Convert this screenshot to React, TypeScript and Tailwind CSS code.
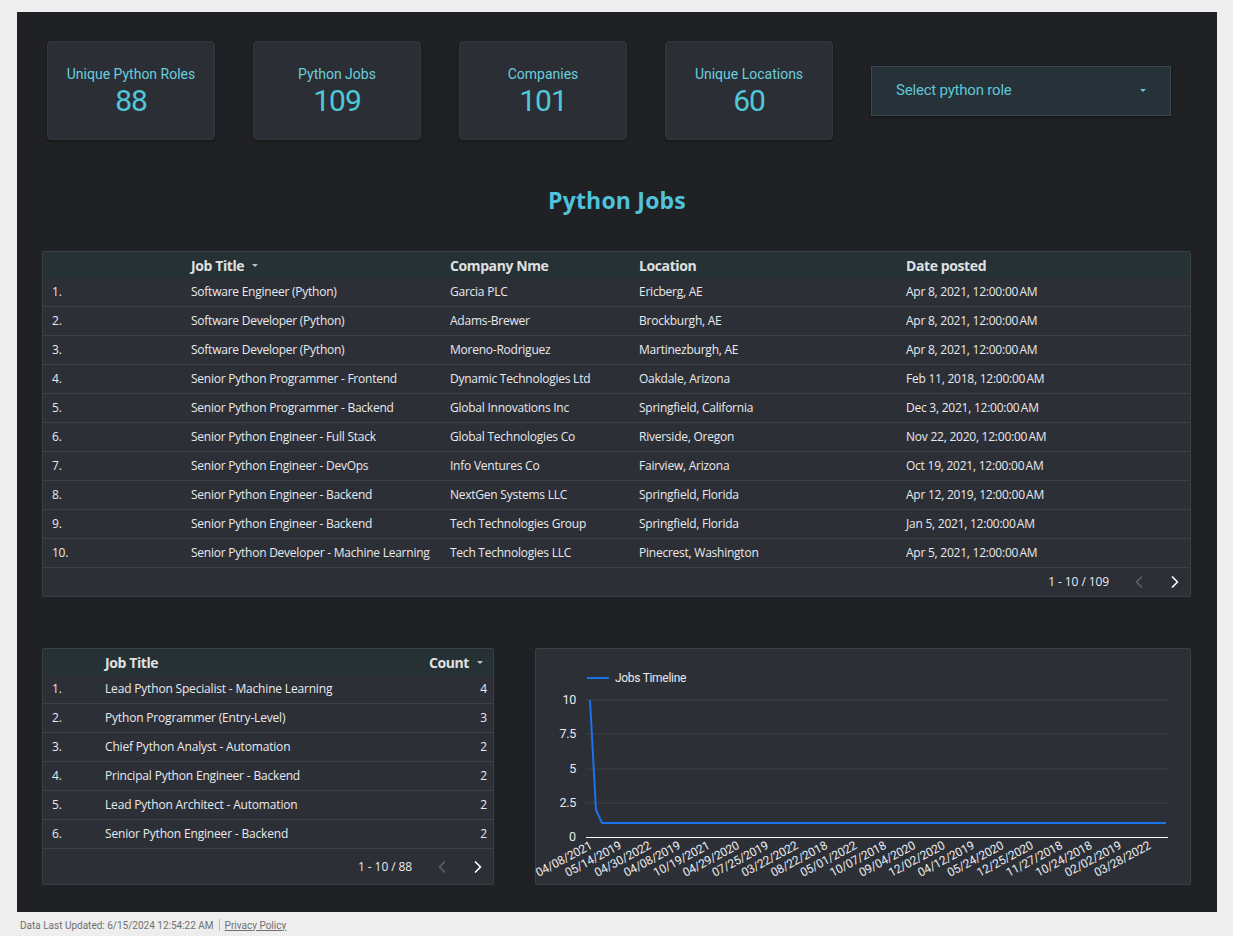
import React from 'react';
import { ChevronLeft, ChevronRight } from 'lucide-react';

const kpis = [
  { label: 'Unique Python Roles', value: '88' },
  { label: 'Python Jobs', value: '109' },
  { label: 'Companies', value: '101' },
  { label: 'Unique Locations', value: '60' },
];

const T = '12:00:00\u202FAM';

const jobs = [
  ['Software Engineer (Python)', 'Garcia PLC', 'Ericberg, AE', `Apr 8, 2021, ${T}`],
  ['Software Developer (Python)', 'Adams-Brewer', 'Brockburgh, AE', `Apr 8, 2021, ${T}`],
  ['Software Developer (Python)', 'Moreno-Rodriguez', 'Martinezburgh, AE', `Apr 8, 2021, ${T}`],
  ['Senior Python Programmer - Frontend', 'Dynamic Technologies Ltd', 'Oakdale, Arizona', `Feb 11, 2018, ${T}`],
  ['Senior Python Programmer - Backend', 'Global Innovations Inc', 'Springfield, California', `Dec 3, 2021, ${T}`],
  ['Senior Python Engineer - Full Stack', 'Global Technologies Co', 'Riverside, Oregon', `Nov 22, 2020, ${T}`],
  ['Senior Python Engineer - DevOps', 'Info Ventures Co', 'Fairview, Arizona', `Oct 19, 2021, ${T}`],
  ['Senior Python Engineer - Backend', 'NextGen Systems LLC', 'Springfield, Florida', `Apr 12, 2019, ${T}`],
  ['Senior Python Engineer - Backend', 'Tech Technologies Group', 'Springfield, Florida', `Jan 5, 2021, ${T}`],
  ['Senior Python Developer - Machine Learning', 'Tech Technologies LLC', 'Pinecrest, Washington', `Apr 5, 2021, ${T}`],
];

const roleCounts: [string, number][] = [
  ['Lead Python Specialist - Machine Learning', 4],
  ['Python Programmer (Entry-Level)', 3],
  ['Chief Python Analyst - Automation', 2],
  ['Principal Python Engineer - Backend', 2],
  ['Lead Python Architect - Automation', 2],
  ['Senior Python Engineer - Backend', 2],
];

const dates = [
  '04/08/2021', '05/14/2019', '04/30/2022', '04/08/2019', '10/19/2021',
  '04/29/2020', '07/25/2019', '03/22/2022', '08/22/2018', '05/01/2022',
  '10/07/2018', '09/04/2020', '12/02/2020', '04/12/2019', '05/24/2020',
  '12/25/2020', '11/27/2018', '10/24/2018', '02/02/2019', '03/28/2022',
];

const SortArrow = () => (
  <svg width="8" height="5" viewBox="0 0 8 5" className="ml-[7px] mt-[1px]">
    <path d="M1 1h6L4 4z" fill="#bdc1c6" />
  </svg>
);

const Pager = ({ text }: { text: string }) => (
  <div className="flex items-center justify-end text-[12px] text-[#e8eaed]">
    <span className="tracking-[-0.1px]">{text}</span>
    <ChevronLeft size={20} strokeWidth={2} className="ml-[20px] text-[#5f6368]" />
    <ChevronRight size={20} strokeWidth={2} className="ml-[16px] text-white" />
  </div>
);

const JobsChart = () => {
  const yTicks = [
    { v: '10', y: 51 },
    { v: '7.5', y: 85 },
    { v: '5', y: 120 },
    { v: '2.5', y: 154 },
  ];
  return (
    <svg width="654" height="235" className="block overflow-visible" style={{ fontFamily: 'Roboto, sans-serif' }}>
      <line x1="51" y1="29" x2="73" y2="29" stroke="#1a73e8" strokeWidth="2" />
      <text x="79" y="33" fontSize="12" fill="#e8eaed" letterSpacing="-0.3">Jobs Timeline</text>
      {yTicks.map((t) => (
        <g key={t.v}>
          <line x1="50" y1={t.y} x2="632" y2={t.y} stroke="#3c4043" strokeWidth="1" />
          <text x="40" y={t.y + 4} fontSize="12.5" fill="#e8eaed" textAnchor="end" letterSpacing="-0.3">{t.v}</text>
        </g>
      ))}
      <text x="40" y="192" fontSize="12.5" fill="#e8eaed" textAnchor="end">0</text>
      <polyline points="54,51 60,161 66,174 630,174" fill="none" stroke="#1a73e8" strokeWidth="2" />
      <line x1="50" y1="188.5" x2="632" y2="188.5" stroke="#ffffff" strokeWidth="1" />
      {dates.map((d, i) => {
        const x = 57 + i * 29.4;
        const y = 199;
        return (
          <text key={i} x={x} y={y} fontSize="12" fill="#e8eaed" textAnchor="end" letterSpacing="-0.2" transform={`rotate(-28 ${x} ${y})`}>
            {d}
          </text>
        );
      })}
    </svg>
  );
};

export default function App() {
  return (
    <div className="min-h-screen bg-[#eeeeee] pl-[17px] pt-[12px]" style={{ fontFamily: '"Open Sans", sans-serif' }}>
      <div className="w-[1200px] h-[900px] bg-[#202124] px-[25px] pt-[29px]">
        {/* KPI row */}
        <div className="flex items-center gap-[38px] ml-[5px]" style={{ fontFamily: 'Roboto, sans-serif' }}>
          {kpis.map((k) => (
            <div key={k.label} className="w-[168px] h-[99px] rounded-[4px] bg-[#2c2e35] border border-[#35373f] shadow-[0_1px_3px_rgba(0,0,0,0.5)] flex flex-col items-center pt-[23px]">
              <div className="text-[14px] leading-[18px] text-[#68cfdd]">{k.label}</div>
              <div className="text-[30px] leading-[36px] text-[#4fc8d8] tracking-[-1px]">{k.value}</div>
            </div>
          ))}
          <div className="w-[300px] h-[50px] bg-[#263238] border border-[#3b4a52] shadow-[0_1px_3px_rgba(0,0,0,0.5)] flex items-center justify-between pl-[24px] pr-[24px]">
            <span className="text-[15px] text-[#5fc6d4] tracking-[-0.2px]">Select python role</span>
            <svg width="6" height="4" viewBox="0 0 6 4"><path d="M0 0h6L3 3z" fill="#5fc6d4" /></svg>
          </div>
        </div>

        {/* Title */}
        <h1 className="mt-[45px] text-center text-[23px] leading-[30px] font-bold text-[#4fc3dc] tracking-[0.2px]">Python Jobs</h1>

        {/* Main table */}
        <div className="mt-[36px] w-[1149px] rounded-[2px] border border-[#3c4043] bg-[#2d2f37] overflow-hidden">
          <div className="grid grid-cols-[148px_259px_189px_267px_1fr] h-[26px] items-center bg-[#263136] text-[14px] font-bold text-[#e0e0e0] tracking-[-0.4px]">
            <div />
            <div className="flex items-center">Job Title<SortArrow /></div>
            <div>Company Nme</div>
            <div>Location</div>
            <div>Date posted</div>
          </div>
          {jobs.map((r, i) => (
            <div key={i} className="grid grid-cols-[148px_259px_189px_267px_1fr] h-[29px] items-center border-b border-[#3c4043] text-[12px] text-[#e8eaed] tracking-[-0.24px]">
              <div className="pl-[9px]">{i + 1}.</div>
              <div className="whitespace-nowrap">{r[0]}</div>
              <div className="whitespace-nowrap">{r[1]}</div>
              <div className="whitespace-nowrap">{r[2]}</div>
              <div className="whitespace-nowrap">{r[3]}</div>
            </div>
          ))}
          <div className="h-[28px] pr-[5px] flex items-center justify-end">
            <Pager text="1 - 10 / 109" />
          </div>
        </div>

        {/* Bottom section */}
        <div className="mt-[51px] flex gap-[41px]">
          <div className="w-[452px] h-[237px] rounded-[2px] border border-[#3c4043] bg-[#2d2f37] overflow-hidden flex flex-col">
            <div className="grid grid-cols-[62px_1fr_auto] h-[26px] items-center bg-[#263136] text-[14px] font-bold text-[#e0e0e0] tracking-[-0.4px] pr-[9px]">
              <div />
              <div>Job Title</div>
              <div className="flex items-center">Count<SortArrow /></div>
            </div>
            {roleCounts.map(([t, c], i) => (
              <div key={i} className="grid grid-cols-[62px_1fr_auto] h-[29px] items-center border-b border-[#3c4043] text-[12px] text-[#e8eaed] tracking-[-0.18px] pr-[6px]">
                <div className="pl-[9px]">{i + 1}.</div>
                <div className="whitespace-nowrap">{t}</div>
                <div>{c}</div>
              </div>
            ))}
            <div className="flex-1 pr-[5px] flex items-center justify-end">
              <Pager text="1 - 10 / 88" />
            </div>
          </div>
          <div className="w-[656px] h-[237px] rounded-[2px] border border-[#3c4043] bg-[#2d2f37]">
            <JobsChart />
          </div>
        </div>
      </div>

      {/* Footer */}
      <div className="flex items-center h-[26px] pl-[3px] text-[10px] text-[#707070]" style={{ fontFamily: 'Roboto, sans-serif' }}>
        <span>Data Last Updated: 6/15/2024 12:54:22 AM</span>
        <span className="mx-[5px] h-[12px] w-px bg-[#bdbdbd]" />
        <span className="underline">Privacy Policy</span>
      </div>
    </div>
  );
}
